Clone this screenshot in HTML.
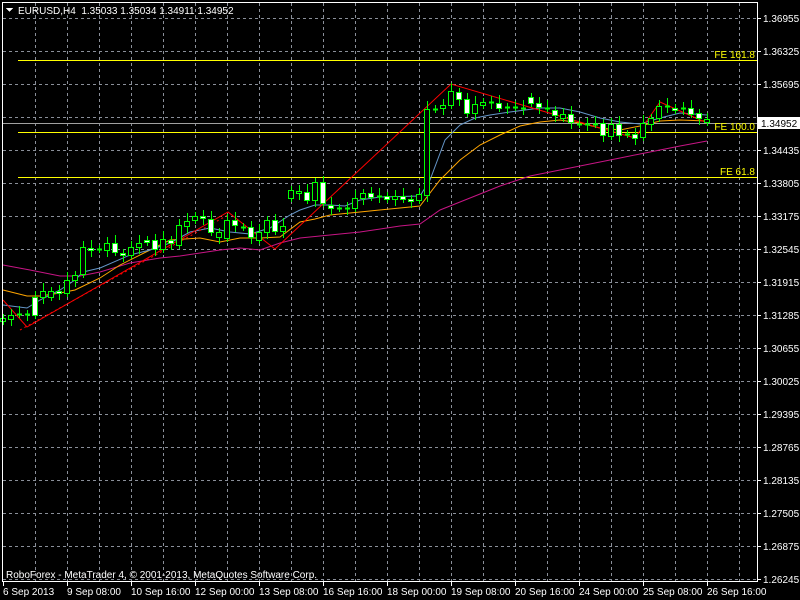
<!DOCTYPE html>
<html><head><meta charset="utf-8"><style>
html,body{margin:0;padding:0;background:#000;width:800px;height:600px;overflow:hidden}
svg{display:block}
text{font-family:"Liberation Sans",sans-serif;font-size:10px;fill:#fff}
</style></head><body>
<svg id="s" width="800" height="600" xmlns="http://www.w3.org/2000/svg" shape-rendering="crispEdges">
<rect width="800" height="600" fill="#000"/>
<g id="grid" stroke="#8a8f99" stroke-width="1" stroke-dasharray="3,3"></g>
<line x1="18" y1="60.5" x2="757" y2="60.5" stroke="#ffff00"/>
<line x1="18" y1="132.5" x2="757" y2="132.5" stroke="#ffff00"/>
<line x1="18" y1="177.5" x2="757" y2="177.5" stroke="#ffff00"/>
<line x1="2" y1="123.5" x2="757" y2="123.5" stroke="#a0a0a0"/>
<text x="755" y="58" text-anchor="end" style="fill:#ffff00">FE 161.8</text>
<text x="755" y="130" text-anchor="end" style="fill:#ffff00">FE 100.0</text>
<text x="755" y="175" text-anchor="end" style="fill:#ffff00">FE 61.8</text>
<g fill="none" stroke-width="1" shape-rendering="auto">
<polyline stroke="#c71585" points="3,265 30,270 60,276 80,276 100,272 130,263 160,258 180,256 200,253 220,250 240,248 260,250 280,243 300,238 320,236 360,232 400,226 420,224 440,210 470,198 500,186 530,176 560,170 590,164 620,158 650,152 680,146 707,141"/>
<polyline stroke="#ffa500" points="3,290 27,296 40,296 60,293 75,290 100,278 120,265 150,250 170,240 200,238 220,242 240,238 260,238 280,237 300,222 315,219 330,215 360,212 420,206 440,180 460,160 480,145 500,135 520,126 540,122 560,120 580,123 600,128 620,130 640,126 660,121 680,120 707,121"/>
<polyline stroke="#6495c8" points="3,305 27,308 40,300 60,290 75,280 83,272 100,268 130,255 150,250 170,243 190,232 210,228 230,232 250,234 270,228 290,215 300,210 315,205 330,205 345,206 360,200 380,197 420,196 430,180 445,140 460,125 475,118 490,115 510,112 540,108 560,108 580,112 600,118 620,122 640,124 660,118 680,113 707,115"/>
<polyline stroke="#ff0000" points="3,300 27,327 228,212 275,249 451,84 600,128 635,138 660,102 707,123"/>
<polyline stroke="#ff0000" stroke-dasharray="2,3" points="20,330 228,215"/>
</g>
<g id="c"></g>
<rect x="2.5" y="2.5" width="755" height="579" fill="none" stroke="#fff"/>
<g id="ax"></g>
<polygon points="6,8 13,8 9.5,12" fill="#fff"/>
<text x="18" y="14" xml:space="preserve">EURUSD,H4  1.35033 1.35034 1.34911 1.34952</text>
<text x="6" y="578">RoboForex - MetaTrader 4, © 2001-2013, MetaQuotes Software Corp.</text>
<rect x="758" y="117" width="42" height="12" fill="#fff"/>
<text x="761" y="127" style="fill:#000">1.34952</text>
</svg>
<script>
var NS="http://www.w3.org/2000/svg";
function el(p,t,a,txt){var e=document.createElementNS(NS,t);for(var k in a)e.setAttribute(k,a[k]);if(txt)e.textContent=txt;p.appendChild(e);return e;}
var g=document.getElementById('grid');
for(var x=35;x<757;x+=32)el(g,'line',{x1:x+.5,y1:3,x2:x+.5,y2:581});
for(var y=18;y<581;y+=33)el(g,'line',{x1:3,y1:y+.5,x2:757,y2:y+.5});
var ax=document.getElementById('ax');
var pr=["1.36955","1.36325","1.35695","1.35065","1.34435","1.33805","1.33175","1.32545","1.31915","1.31285","1.30655","1.30025","1.29395","1.28765","1.28135","1.27505","1.26875","1.26245"];
for(var i=0;i<pr.length;i++){var yy=18+33*i;el(ax,'line',{x1:757,y1:yy+.5,x2:761,y2:yy+.5,stroke:'#fff'});if(pr[i]!="1.35065")el(ax,'text',{x:763,y:yy+4},pr[i]);}
var tl=["6 Sep 2013","9 Sep 08:00","10 Sep 16:00","12 Sep 00:00","13 Sep 08:00","16 Sep 16:00","18 Sep 00:00","19 Sep 08:00","20 Sep 16:00","24 Sep 00:00","25 Sep 08:00","26 Sep 16:00"];
for(var i=0;i<tl.length;i++){var xx=3+64*i;el(ax,'line',{x1:xx+.5,y1:581,x2:xx+.5,y2:586,stroke:'#fff'});el(ax,'text',{x:xx,y:595},tl[i]);}
var C=[[3,318,321,1],[11,315,319,1],[19,314,314,2],[27,314,314,2],[35,297,315,0],[43,291,297,1],[51,291,297,1],[59,291,293,0],[67,280,293,1],[75,275,280,1],[83,247,274,1],[91,248,250,0],[99,249,249,2],[107,243,250,1],[115,243,252,0],[123,253,255,0],[131,247,255,1],[139,243,247,1],[147,240,242,0],[155,240,249,0],[163,239,249,1],[171,240,243,0],[179,225,245,1],[187,221,226,1],[195,216,220,1],[203,216,218,0],[211,219,232,0],[219,232,237,1],[227,220,238,1],[235,220,225,0],[243,227,227,2],[251,227,237,0],[259,232,240,1],[267,220,232,1],[275,220,231,0],[283,226,231,1],[291,190,198,1],[299,191,193,1],[307,192,200,0],[315,182,200,1],[323,182,203,0],[331,205,208,0],[339,208,208,2],[347,208,208,2],[355,198,208,1],[363,193,198,1],[371,193,197,0],[379,196,196,2],[387,196,199,0],[395,196,199,1],[403,196,199,0],[411,199,201,0],[419,194,200,1],[427,109,195,1],[435,109,109,2],[443,105,108,1],[451,91,105,1],[459,92,99,0],[467,99,113,0],[475,104,113,1],[483,102,105,1],[491,102,102,2],[499,103,108,0],[507,107,107,2],[515,107,107,2],[523,108,108,2],[531,97,103,0],[539,103,107,0],[547,108,108,2],[555,110,115,0],[563,114,118,1],[571,114,122,0],[579,124,124,2],[587,124,124,2],[595,124,124,2],[603,123,135,0],[611,124,136,1],[619,124,135,0],[627,134,134,2],[635,134,138,0],[643,123,137,1],[651,118,124,1],[659,106,118,1],[667,106,106,2],[675,108,110,0],[683,108,108,2],[691,108,114,0],[699,113,118,0],[707,119,122,1]];
var cg=document.getElementById('c');
for(var i=0;i<C.length;i++){var c=C[i],x=c[0];var h=c[1]-4-(i%3)*2,l=c[2]+4+(i%2)*3;
el(cg,'line',{x1:x+.5,y1:h,x2:x+.5,y2:l,stroke:'#00ff00'});
if(c[3]==2)el(cg,'line',{x1:x-2,y1:c[1]+.5,x2:x+3,y2:c[1]+.5,stroke:'#00ff00',"stroke-width":2});
else el(cg,'rect',{x:x-2.5,y:c[1]+.5,width:5,height:Math.max(c[2]-c[1],2),fill:c[3]?'#000':'#fff',stroke:'#00ff00'});}
</script>
</body></html>
